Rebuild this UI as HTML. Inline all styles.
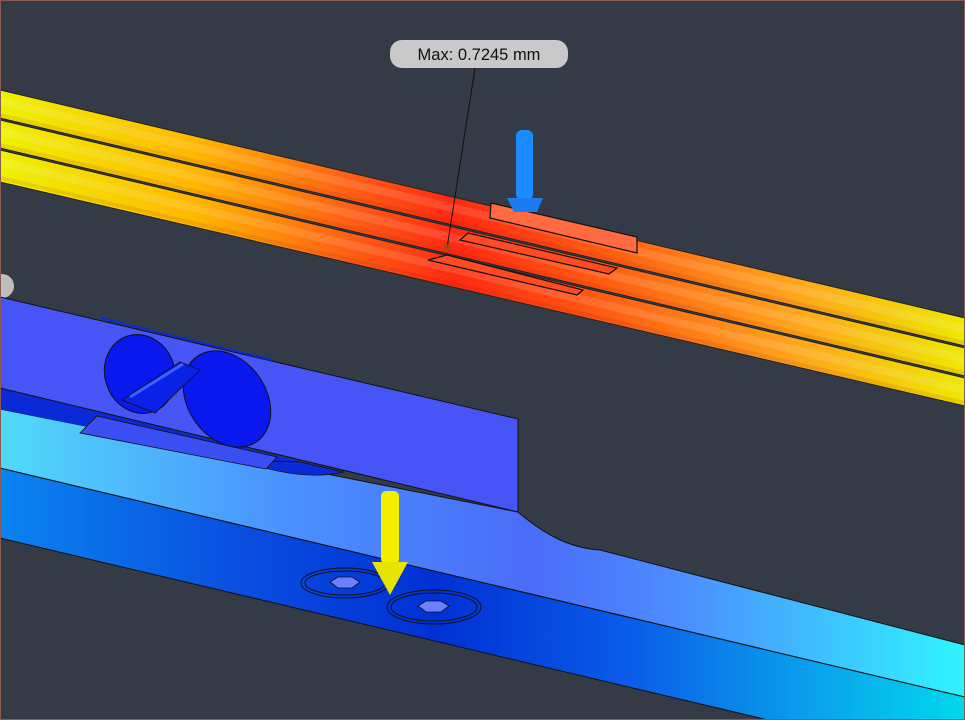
<!DOCTYPE html>
<html><head><meta charset="utf-8"><style>
html,body{margin:0;padding:0;background:#343b47;}
svg{display:block}
</style></head><body>
<svg width="965" height="720" viewBox="0 0 965 720" xmlns="http://www.w3.org/2000/svg">
<defs>
<linearGradient id="rod" gradientUnits="userSpaceOnUse" x1="0" y1="0" x2="965" y2="0">
<stop offset="0" stop-color="#eef200"/>
<stop offset="0.2" stop-color="#ffb800"/>
<stop offset="0.36" stop-color="#ff6014"/>
<stop offset="0.47" stop-color="#ff2a12"/>
<stop offset="0.62" stop-color="#ff5a12"/>
<stop offset="0.82" stop-color="#ffa41c"/>
<stop offset="1" stop-color="#eee800"/>
</linearGradient>
<linearGradient id="cyanTop" gradientUnits="userSpaceOnUse" x1="0" y1="0" x2="965" y2="0">
<stop offset="0" stop-color="#50daf8"/>
<stop offset="0.3" stop-color="#4a90ff"/>
<stop offset="0.55" stop-color="#4a6cf8"/>
<stop offset="0.7" stop-color="#4c8cff"/>
<stop offset="1" stop-color="#30f4ff"/>
</linearGradient>
<linearGradient id="front" gradientUnits="userSpaceOnUse" x1="0" y1="0" x2="965" y2="0">
<stop offset="0" stop-color="#0a84f0"/>
<stop offset="0.25" stop-color="#0a4ee0"/>
<stop offset="0.45" stop-color="#0030d4"/>
<stop offset="0.65" stop-color="#0a5ce8"/>
<stop offset="0.85" stop-color="#0aa4ec"/>
<stop offset="1" stop-color="#00d8ec"/>
</linearGradient>
</defs>
<rect width="965" height="720" fill="#343b47"/>

<!-- rods -->
<g stroke="#222" stroke-width="1">
<polygon points="0,90 965,318 965,346 0,118" fill="url(#rod)"/>
<polygon points="0,120 965,348 965,376 0,148" fill="url(#rod)"/>
<polygon points="0,150 965,378 965,406 0,182" fill="url(#rod)"/>
</g>
<g stroke="#fff" stroke-opacity="0.12" stroke-width="8" fill="none">
<line x1="0" y1="101" x2="965" y2="329"/>
<line x1="0" y1="131" x2="965" y2="359"/>
<line x1="0" y1="162" x2="965" y2="390"/>
</g>
<g stroke="#800" stroke-opacity="0.1" stroke-width="4" fill="none">
<line x1="0" y1="115" x2="965" y2="343"/>
<line x1="0" y1="145" x2="965" y2="373"/>
<line x1="0" y1="178" x2="965" y2="403"/>
</g>

<!-- plates -->
<g stroke="#111" stroke-width="1.2" fill="#ff4a24">
<polygon points="428,260 447,255 583,290 577,295"/>
<polygon points="460,240 468,233 617,268 609,274"/>
<polygon points="491,203 637,237 637,253 490,218" fill="#ff6a40"/>
</g>

<!-- blue arrow -->
<rect x="516" y="130" width="17" height="70" rx="6" fill="#1a8cff"/>
<polygon points="507,198 543,198 537,212 514,212" fill="#1a7cf0"/>

<!-- leader line -->
<line x1="475" y1="68" x2="447" y2="248" stroke="#111" stroke-width="1"/>
<circle cx="447" cy="248" r="4" fill="#a04a10" opacity="0.8"/>

<!-- label -->
<rect x="390" y="40" width="178" height="28" rx="12" fill="#c9c9c9"/>
<text x="479" y="60" text-anchor="middle" font-family="Liberation Sans, sans-serif" font-size="16.5" fill="#111">Max: 0.7245 mm</text>

<!-- gray knob -->
<circle cx="2" cy="286" r="12" fill="#bdbdbd"/>

<!-- lower bar front face -->
<polygon points="0,468 965,697 965,720 768,720 0,538" fill="url(#front)" stroke="#111" stroke-width="1"/>
<!-- lower bar top face -->
<path d="M0,409 L518,512 C545,535 570,548 600,550 L965,645 L965,697 L0,468 Z" fill="url(#cyanTop)" stroke="#111" stroke-width="1"/>
<!-- groove -->
<polygon points="0,388 344,472 300,470 0,409" fill="#0a2ad8"/>
<path d="M240,460 Q300,482 344,472 L300,462 Z" fill="#0a2ad8" stroke="#111" stroke-width="0.8"/>
<!-- block -->
<polygon points="0,297 518,419 518,512 0,388" fill="#4755f6" stroke="#111" stroke-width="1"/>
<line x1="100" y1="318" x2="272" y2="360" stroke="#0a2ad8" stroke-width="2"/>
<!-- slot -->
<polygon points="80,433 97,416 277,457 266,469" fill="#3a4ef4" stroke="#111" stroke-width="0.8"/>
<!-- ellipses -->
<g stroke="#111" stroke-width="1" fill="#0818ee">
<ellipse cx="140" cy="374" rx="35" ry="40" transform="rotate(-20 140 374)"/>
<ellipse cx="227" cy="399" rx="52" ry="39" transform="rotate(55 227 399)"/>
</g>
<polygon points="122,400 180,362 200,370 155,413" fill="#0a22e8" stroke="#111" stroke-width="0.8"/>
<line x1="130" y1="397" x2="183" y2="364" stroke="#3a60ff" stroke-width="3"/>

<!-- screw holes -->
<g fill="none" stroke="#111" stroke-width="1">
<ellipse cx="345" cy="583" rx="44" ry="15"/>
<ellipse cx="345" cy="583" rx="40" ry="12"/>
<ellipse cx="434" cy="607" rx="47" ry="17"/>
<ellipse cx="434" cy="607" rx="43" ry="14"/>
</g>
<polygon points="330,582 338,577 352,577 360,582 352,588 338,588" fill="#6a80ff" stroke="#111" stroke-width="0.8"/>
<polygon points="418,606 426,601 441,601 449,606 441,612 426,612" fill="#6a80ff" stroke="#111" stroke-width="0.8"/>

<!-- yellow arrow -->
<rect x="381" y="491" width="18" height="73" rx="5" fill="#f2ee00"/>
<polygon points="372,562 408,562 390,595" fill="#e8e400"/>

<rect x="0.5" y="0.5" width="964" height="719" fill="none" stroke="#8a5a52" stroke-width="1"/>
</svg>
</body></html>
